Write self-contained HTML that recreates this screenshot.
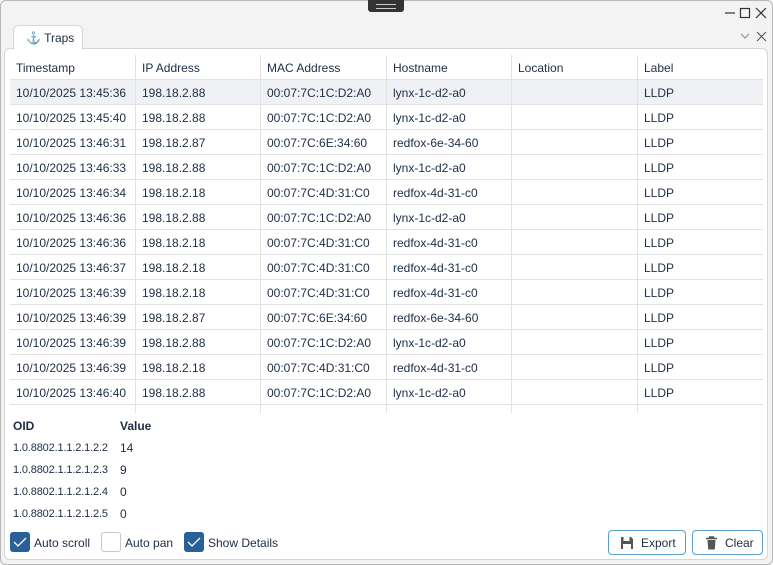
<!DOCTYPE html>
<html><head><style>
*{margin:0;padding:0;box-sizing:border-box}
body{width:773px;height:565px;background:#f3f3f3;font-family:"Liberation Sans",sans-serif;font-size:12px;color:#1e2d45;position:relative;overflow:hidden}
.win{position:absolute;left:0;top:0;width:773px;height:565px;border:1px solid #b8b8b8;border-radius:6px}
.grip{position:absolute;left:368px;top:0;width:36px;height:12px;background:#333;border-radius:0 0 3px 3px}
.grip:after{content:"";position:absolute;left:8px;top:4px;width:20px;height:3px;border-top:1px solid #ccc;border-bottom:1px solid #ccc}
.panel{position:absolute;left:4px;top:48px;width:764px;height:512px;background:#fff;border:1px solid #d6d6d6;border-radius:6px}
.tab{position:absolute;left:13px;top:25px;width:70px;height:25px;background:#fff;border:1px solid #d6d6d6;border-bottom:none;border-radius:6px 6px 0 0;padding:5px 0 0 12px;font-size:12px}
.t{position:absolute;white-space:nowrap}
.oid{font-size:11px;letter-spacing:-0.15px;width:104px;overflow:hidden}
.tbl{position:absolute;left:10px;top:55px;width:753px;height:358px;overflow:hidden}
.row{position:absolute;left:0;width:753px;height:25px;border-bottom:1px solid #e2e2e2}
.row span{position:absolute;top:6px;white-space:nowrap}
.vl{position:absolute;top:0;width:1px;height:358px;background:#e2e2e2}
.cb{position:absolute;top:532px;width:20px;height:20px;border-radius:3px;background:#2a6099}
.cb svg{position:absolute;left:3px;top:4px}
.cbe{background:#fff;border:1px solid #c8c8c8}
.btn{position:absolute;top:530px;height:25px;border:1px solid #5a9fc9;border-radius:4px;background:#fff}
</style></head><body>
<div class="win"></div>
<div class="grip"></div>
<svg style="position:absolute;left:724px;top:6px" width="46" height="14"><path d="M1 7h10" stroke="#333" stroke-width="1.2"/><rect x="16.5" y="2.5" width="9" height="9" fill="none" stroke="#333" stroke-width="1.2"/><path d="M32 2l10 10M42 2l-10 10" stroke="#333" stroke-width="1.2"/></svg>
<svg style="position:absolute;left:740px;top:31px" width="30" height="12"><path d="M1 3l4 4 4-4" stroke="#888" fill="none"/><path d="M17 1l9 9M26 1l-9 9" stroke="#555" stroke-width="1.1"/></svg>
<div class="panel"></div>
<div class="tab"><span style="color:#1565b0;font-weight:bold">⚓</span> Traps</div>
<div class="tbl">
<div class="row" style="top:0"><span style="left:6px">Timestamp</span><span style="left:132px">IP Address</span><span style="left:257px">MAC Address</span><span style="left:383px">Hostname</span><span style="left:508px">Location</span><span style="left:634px">Label</span></div>
<div id="rows"></div>
<div class="vl" style="left:125px"></div><div class="vl" style="left:250px"></div><div class="vl" style="left:376px"></div><div class="vl" style="left:501px"></div><div class="vl" style="left:627px"></div>
</div>
<script>
var d=[["13:45:36","88","1C:D2:A0","lynx-1c-d2-a0"],["13:45:40","88","1C:D2:A0","lynx-1c-d2-a0"],["13:46:31","87","6E:34:60","redfox-6e-34-60"],["13:46:33","88","1C:D2:A0","lynx-1c-d2-a0"],["13:46:34","18","4D:31:C0","redfox-4d-31-c0"],["13:46:36","88","1C:D2:A0","lynx-1c-d2-a0"],["13:46:36","18","4D:31:C0","redfox-4d-31-c0"],["13:46:37","18","4D:31:C0","redfox-4d-31-c0"],["13:46:39","18","4D:31:C0","redfox-4d-31-c0"],["13:46:39","87","6E:34:60","redfox-6e-34-60"],["13:46:39","88","1C:D2:A0","lynx-1c-d2-a0"],["13:46:39","18","4D:31:C0","redfox-4d-31-c0"],["13:46:40","88","1C:D2:A0","lynx-1c-d2-a0"],["13:46:40","87","6E:34:60","redfox-6e-34-60"]];
var h="";d.forEach(function(r,i){h+='<div class="row" style="top:'+(25+i*25)+'px;'+(i==0?'background:#eff1f4;':'')+'"><span style="left:6px">10/10/2025 '+r[0]+'</span><span style="left:132px">198.18.2.'+r[1]+'</span><span style="left:257px">00:07:7C:'+r[2]+'</span><span style="left:383px">'+r[3]+'</span><span style="left:634px">LLDP</span></div>'});
document.getElementById("rows").innerHTML=h;
</script>
<div class="t" style="left:13px;top:419px;font-weight:bold">OID</div>
<div class="t" style="left:120px;top:419px;font-weight:bold">Value</div>
<div class="t oid" style="left:13px;top:442px">1.0.8802.1.1.2.1.2.2</div><div class="t" style="left:120px;top:441px">14</div>
<div class="t oid" style="left:13px;top:464px">1.0.8802.1.1.2.1.2.3</div><div class="t" style="left:120px;top:463px">9</div>
<div class="t oid" style="left:13px;top:486px">1.0.8802.1.1.2.1.2.4</div><div class="t" style="left:120px;top:485px">0</div>
<div class="t oid" style="left:13px;top:508px">1.0.8802.1.1.2.1.2.5</div><div class="t" style="left:120px;top:507px">0</div>
<div class="cb" style="left:10px"><svg width="14" height="12"><path d="M1 6l4 4 8-8" stroke="#fff" fill="none" stroke-width="1.3"/></svg></div>
<div class="t" style="left:34px;top:536px">Auto scroll</div>
<div class="cb cbe" style="left:101px"></div>
<div class="t" style="left:125px;top:536px">Auto pan</div>
<div class="cb" style="left:184px"><svg width="14" height="12"><path d="M1 6l4 4 8-8" stroke="#fff" fill="none" stroke-width="1.3"/></svg></div>
<div class="t" style="left:208px;top:536px">Show Details</div>
<div class="btn" style="left:608px;width:78px"><svg style="position:absolute;left:11px;top:5px" width="14" height="14"><path d="M1 1h10l2 2v10H1z" fill="#555"/><rect x="3.5" y="1" width="6" height="4" fill="#fff"/><rect x="3" y="8" width="8" height="5" fill="#fff"/></svg><span class="t" style="left:32px;top:5px">Export</span></div>
<div class="btn" style="left:692px;width:71px"><svg style="position:absolute;left:12px;top:5px" width="13" height="14"><path d="M1 2.5h11M4.5 2.5V1h4v1.5" stroke="#555" fill="none" stroke-width="1.4"/><path d="M2.5 4h8l-.7 9.5H3.2z" fill="#555"/></svg><span class="t" style="left:32px;top:5px">Clear</span></div>
</body></html>
